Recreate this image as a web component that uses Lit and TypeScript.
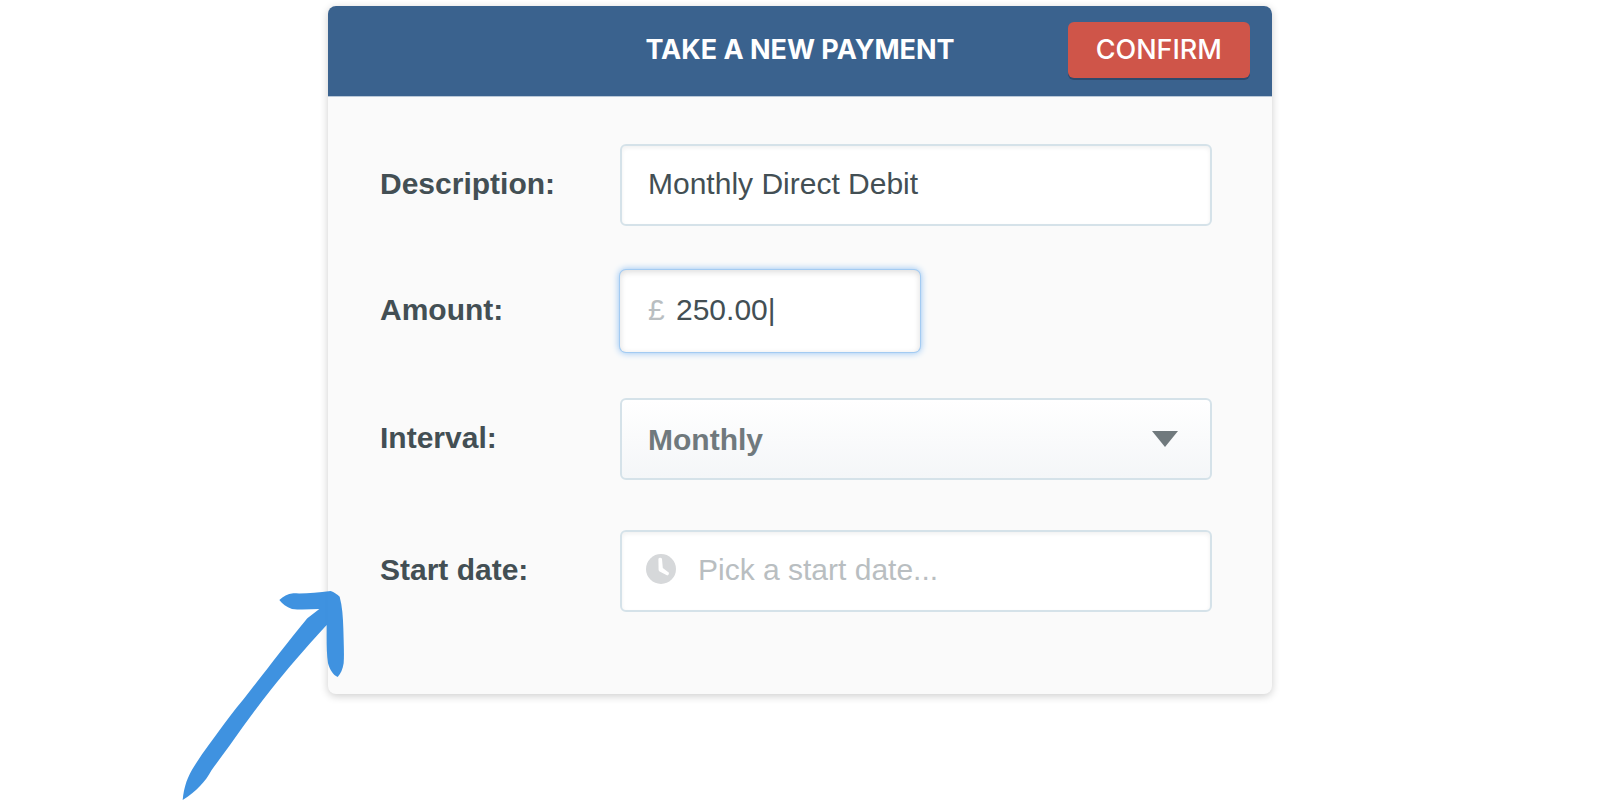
import { LitElement, html, css } from "lit";
import { customElement, property } from "lit/decorators.js";

@customElement("hand-arrow")
class HandArrow extends LitElement {
  static styles = css`
    :host {
      display: block;
      pointer-events: none;
    }
    .arrow {
      display: block;
      fill: #308ade;
      fill-opacity: 0.93;
    }
  `;

  render() {
    return html`
      <svg class="arrow" width="190" height="228" viewBox="0 0 570 684" aria-hidden="true">
        <path
          d="M328 60 C340 50 352 42 370 40 C406 41 440 39 482 33 C492 37 502 43 509 50
             C517 80 519 110 520 145 C521 185 523 225 521 250 C518 268 512 282 503 291
             C489 285 480 270 474 250 C469 215 470 175 470 135
             C400 211 350 270 302 330 C260 383 220 438 180 495 C160 522 142 547 125 570
             C106 605 80 634 38 660 C42 620 52 590 75 555
             C100 515 130 477 160 435 C185 400 213 368 242 330
             C300 257 350 190 412 115 L448 87
             C420 88 392 90 366 87 C349 81 337 72 328 60 Z"
        ></path>
      </svg>
    `;
  }
}

@customElement("app-root")
class AppRoot extends LitElement {
  @property() description = "Monthly Direct Debit";
  @property() amount = "250.00|";

  static styles = css`
    :host {
      display: block;
      box-sizing: border-box;
      min-height: 100vh;
      padding: 6px 16px 0;
      background: #fff;
      font-family: "Liberation Sans", Arial, sans-serif;
      font-size: 30px;
      line-height: 36px;
      color: #434f54;
    }
    .card {
      position: relative;
      box-sizing: border-box;
      max-width: 944px;
      margin: 0 auto;
      border-radius: 8px;
      background: #fafafa;
      box-shadow: 0 2px 8px rgba(0, 0, 0, 0.2);
    }
    .header {
      display: grid;
      grid-template-columns: 1fr auto 1fr;
      align-items: center;
      padding: 16px 22px 18px;
      border-bottom: 1px solid #b9c8d8;
      border-radius: 8px 8px 0 0;
      background: #3a628e;
      color: #fff;
      font-family: Inter, Lato, sans-serif;
      font-size: 27px;
      line-height: 32px;
    }
    .title {
      grid-column: 2;
      margin: 0;
      font-size: inherit;
      font-weight: 700;
    }
    .confirm {
      justify-self: end;
      height: 56px;
      padding: 0 28px;
      border: 0;
      border-radius: 6px;
      background: #cf5549;
      box-shadow: 0 2px 0 #2d4a6d;
      color: inherit;
      font: inherit;
      font-weight: 500;
    }
    .form {
      display: flex;
      flex-direction: column;
      gap: 46px;
      padding: 47px 60px 82px 52px;
    }
    .group {
      display: flex;
      flex-direction: column;
      gap: 44px;
    }
    .schedule {
      gap: 50px;
    }
    .row {
      display: grid;
      grid-template-columns: 240px 1fr;
      align-items: center;
    }
    .label {
      padding-bottom: 2px;
      font-weight: 700;
    }
    .field {
      display: flex;
      align-items: center;
      box-sizing: border-box;
      height: 82px;
      padding: 0 26px;
      border: 2px solid #d5e2e9;
      border-radius: 6px;
      background: #fff;
      box-shadow: inset 0 2px 4px rgba(0, 0, 0, 0.06);
    }
    .focused {
      width: 300px;
      padding: 0 28px;
      border: 0;
      box-shadow:
        0 0 0 1px #a3cbf2,
        0 0 7px 1px #8fc1f3,
        inset 0 2px 6px rgba(0, 0, 0, 0.14);
    }
    .input {
      flex: 1;
      min-width: 0;
      height: 36px;
      margin: 0;
      padding: 0 0 2px;
      border: 0;
      outline: 0;
      background: none;
      color: inherit;
      font: inherit;
    }
    .input::placeholder {
      color: #b9bec1;
      opacity: 1;
    }
    .currency {
      width: 28px;
      padding-bottom: 2px;
      color: #b9bec1;
    }
    .clock {
      flex: none;
      margin: 0 22px 4px -2px;
    }
    .picker {
      display: grid;
      align-items: center;
    }
    .select {
      grid-area: 1 / 1;
      appearance: none;
      box-sizing: border-box;
      width: 100%;
      height: 82px;
      margin: 0;
      padding: 2px 60px 0 26px;
      border: 2px solid #d5e2e9;
      border-radius: 6px;
      background: linear-gradient(#fff, #f4f6f8);
      color: #70797d;
      font: inherit;
      font-weight: 700;
    }
    .caret {
      grid-area: 1 / 1;
      justify-self: end;
      margin-right: 34px;
      fill: #70797d;
      pointer-events: none;
    }
    .pointer {
      position: absolute;
      left: -158px;
      top: 574px;
    }
  `;

  render() {
    return html`
      <main class="card">
        <header class="header">
          <h1 class="title">TAKE A NEW PAYMENT</h1>
          <button class="confirm" type="submit" form="payment">CONFIRM</button>
        </header>
        <form class="form" id="payment">
          <div class="group">
            <div class="row">
              <label class="label" for="description">Description:</label>
              <div class="field">
                <input class="input" id="description" type="text" .value=${this.description} />
              </div>
            </div>
            <div class="row">
              <label class="label" for="amount">Amount:</label>
              <div class="field focused">
                <span class="currency">£</span>
                <input class="input" id="amount" type="text" inputmode="decimal" .value=${this.amount} />
              </div>
            </div>
          </div>
          <div class="group schedule">
            <div class="row">
              <label class="label" for="interval">Interval:</label>
              <div class="picker">
                <select class="select" id="interval">
                  <option selected>Monthly</option>
                </select>
                <svg class="caret" width="26" height="16" viewBox="0 0 26 16" aria-hidden="true">
                  <path d="M0 0 H26 L13 16 Z"></path>
                </svg>
              </div>
            </div>
            <div class="row">
              <label class="label" for="start">Start date:</label>
              <div class="field">
                <svg class="clock" width="30" height="30" viewBox="0 0 30 30" aria-hidden="true">
                  <circle cx="15" cy="15" r="15" fill="#d6d8da"></circle>
                  <path
                    d="M12.4 5 Q12.6 3.8 14.2 3.8 Q15.8 3.8 16 5 L16.8 14 L23 18.8 Q23.2 21 21.4 21.4 L13.6 17.6 Q12.6 17 12.6 15.8 Z"
                    fill="#fff"
                  ></path>
                </svg>
                <input class="input" id="start" type="text" placeholder="Pick a start date..." />
              </div>
            </div>
          </div>
        </form>
        <hand-arrow class="pointer"></hand-arrow>
      </main>
    `;
  }
}
